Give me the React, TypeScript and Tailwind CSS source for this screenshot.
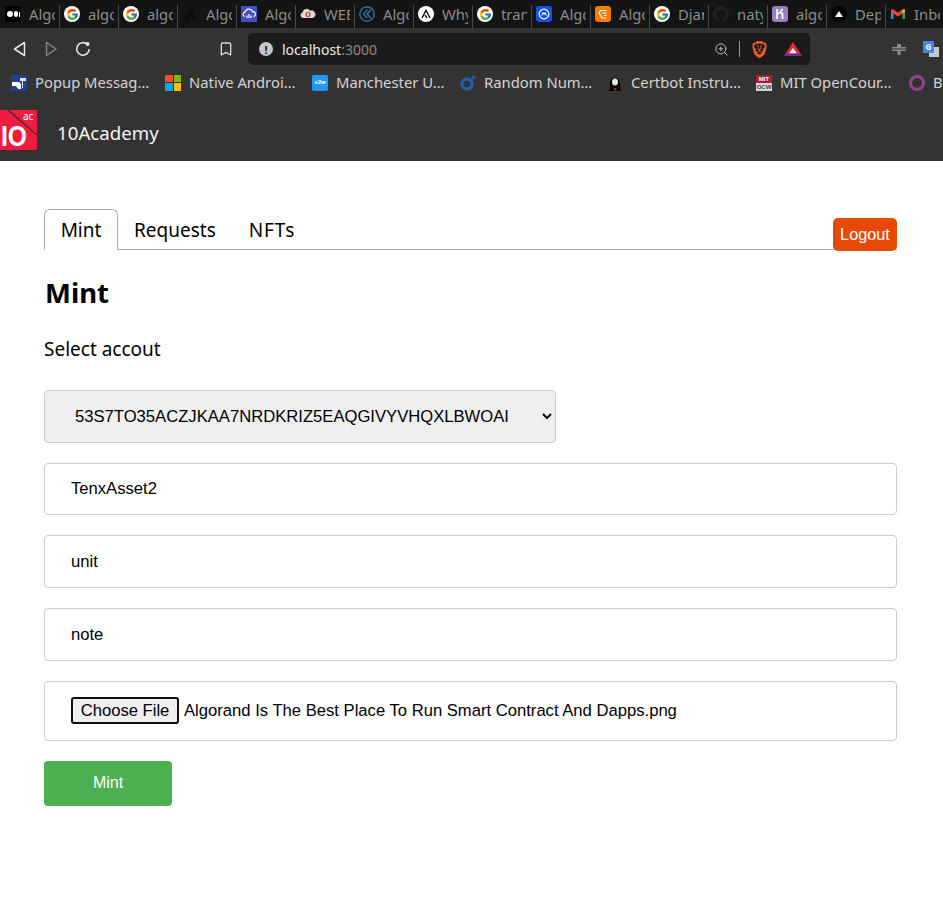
import React from "react";
import { FcGoogle } from "react-icons/fc";
import { SiBrave, SiGithub } from "react-icons/si";
import { Bookmark, ZoomIn } from "lucide-react";

const Medium = () => (
  <div className="w-4 h-4 bg-black rounded-[2px] flex items-center justify-center gap-px">
    <span className="w-[6px] h-[6px] rounded-full bg-white" />
    <span className="w-[4px] h-[6px] rounded-full bg-white" />
    <span className="w-[1px] h-[5px] bg-white" />
  </div>
);
const GoogleIcon = () => (
  <div className="w-4 h-4 rounded-full bg-white flex items-center justify-center">
    <FcGoogle size={13} />
  </div>
);
const AlgoMark = ({ round }: { round?: boolean }) => (
  <div className={`w-4 h-4 flex items-center justify-center ${round ? "bg-white rounded-full" : ""}`}>
    <svg viewBox="0 0 16 16" className="w-4 h-4">
      <path d={round ? "M4 12 8 4.5 12 12M7 9l2 3" : "M1 15 10 1M5 15 10 6l2 9"} fill="none" stroke={round ? "#000" : "#0a0a0a"} strokeWidth={round ? 1.3 : 1.8} />
    </svg>
  </div>
);
const CloudBlue = () => (
  <div className="w-4 h-4 bg-[#3f51c4] flex items-center justify-center">
    <svg viewBox="0 0 16 16" className="w-4 h-4">
      <path d="M3.5 10.5a2.3 2.3 0 0 1 .5-4.4 4 4 0 0 1 7.6-.3 2.4 2.4 0 0 1 1 4.7" fill="none" stroke="#fff" strokeWidth="1.2" />
      <path d="M6 12V9.5M8 12V8M10 12V9.5" stroke="#fff" strokeWidth="1.2" />
    </svg>
  </div>
);
const CloudRed = () => (
  <svg viewBox="0 0 16 16" className="w-4 h-4">
    <path d="M3 12a3 3 0 0 1-.4-5.8A4 4 0 0 1 10 4.8 3.5 3.5 0 0 1 13 12Z" fill="#d8d8d8" />
    <circle cx="8" cy="8.5" r="2" fill="none" stroke="#d33" strokeWidth="1.2" />
  </svg>
);
const Kava = () => (
  <svg viewBox="0 0 16 16" className="w-4 h-4">
    <circle cx="8" cy="8" r="7.2" fill="none" stroke="#2a7fb8" strokeWidth="1.3" />
    <path d="M8.5 3.8 4.5 8l4 4.2M12 3.8 8 8l4 4.2" fill="none" stroke="#2a7fb8" strokeWidth="1.3" />
  </svg>
);
const BlueChat = () => (
  <div className="w-4 h-4 rounded-[3px] bg-[#1652f0] flex items-center justify-center">
    <svg viewBox="0 0 16 16" className="w-4 h-4">
      <circle cx="8" cy="8" r="4.8" fill="none" stroke="#fff" strokeWidth="1.2" />
      <path d="m5.6 9.5 1.5-3 1 2 1-2 1.2 3" fill="none" stroke="#fff" strokeWidth="1" />
    </svg>
  </div>
);
const OrangeBox = () => (
  <div className="w-4 h-4 rounded-[3px] bg-[#f57c00] flex items-center justify-center">
    <svg viewBox="0 0 16 16" className="w-4 h-4">
      <path d="M11.5 4.5h-6L4 7l3 5h4M7 7h4.5M9 9.5h2.5" fill="none" stroke="#fff" strokeWidth="1.2" />
    </svg>
  </div>
);
const Heroku = () => (
  <div className="w-4 h-4 rounded-[3px] bg-[#9a7fc0] flex items-center justify-center">
    <svg viewBox="0 0 16 16" className="w-4 h-4">
      <path d="M5 3v10M5 8c2-1.6 5-2 5.5 0v5M10.5 3l-2 2.5" fill="none" stroke="#fff" strokeWidth="1.7" />
    </svg>
  </div>
);
const Deploy = () => (
  <div className="w-4 h-4 rounded-full bg-black flex items-center justify-center">
    <div className="w-0 h-0 border-l-[4px] border-r-[4px] border-b-[6px] border-l-transparent border-r-transparent border-b-white" />
  </div>
);
const Gmail = () => (
  <svg viewBox="0 0 16 16" className="w-4 h-4">
    <path d="M1 13V4l2.5 1.8V13Z" fill="#4285f4" />
    <path d="M15 13V4l-2.5 1.8V13Z" fill="#34a853" />
    <path d="M1 4.5 3 3l5 3.8L13 3l2 1.5-1 2.3-1.5 1L8 10.6 3.5 7.800 2 6.800Z" fill="#ea4335" />
    <path d="M12.500 3.400 15 3.500v2l-2.500 2.300Z" fill="#fbbc04" />
  </svg>
);

const tabs: { icon: React.ReactNode; label: string }[] = [
  { icon: <Medium />, label: "Algo" },
  { icon: <GoogleIcon />, label: "algo" },
  { icon: <GoogleIcon />, label: "algo" },
  { icon: <AlgoMark />, label: "Algo" },
  { icon: <CloudBlue />, label: "Algo" },
  { icon: <CloudRed />, label: "WEB" },
  { icon: <Kava />, label: "Algo" },
  { icon: <AlgoMark round />, label: "Why" },
  { icon: <GoogleIcon />, label: "tran" },
  { icon: <BlueChat />, label: "Algo" },
  { icon: <OrangeBox />, label: "Algo" },
  { icon: <GoogleIcon />, label: "Djan" },
  { icon: <SiGithub size={16} color="#1d2226" />, label: "naty" },
  { icon: <Heroku />, label: "algo" },
  { icon: <Deploy />, label: "Dep" },
  { icon: <Gmail />, label: "Inbo" },
];

const bookmarks: { icon: React.ReactNode; label: string; width: string }[] = [
  {
    icon: (
      <svg viewBox="0 0 16 16" className="w-4 h-4">
        <rect width="16" height="16" fill="#24418f" />
        <path d="M1 7h7l2 2v5H7L5 11H1Z" fill="#fff" />
        <path d="M9 3h6v3h-3v7h-1V6H9Z" fill="#dfe6f5" />
      </svg>
    ),
    label: "Popup Messag…",
    width: "w-[154px]",
  },
  {
    icon: (
      <div className="w-4 h-4 grid grid-cols-2 gap-px">
        <span className="bg-[#f25022]" />
        <span className="bg-[#7fba00]" />
        <span className="bg-[#00a4ef]" />
        <span className="bg-[#ffb900]" />
      </div>
    ),
    label: "Native Androi…",
    width: "w-[147px]",
  },
  {
    icon: (
      <div className="w-4 h-4 rounded-[2px] bg-[#2196f3] flex items-center justify-center text-[6px] font-bold text-white font-['Liberation_Sans',sans-serif]">
        s2w
      </div>
    ),
    label: "Manchester U…",
    width: "w-[148px]",
  },
  {
    icon: (
      <svg viewBox="0 0 16 16" className="w-4 h-4">
        <circle cx="7" cy="9" r="5" fill="none" stroke="#1f5fa8" strokeWidth="3.400" />
        <circle cx="13.500" cy="2.500" r="2" fill="#1f5fa8" />
      </svg>
    ),
    label: "Random Num…",
    width: "w-[147px]",
  },
  {
    icon: (
      <svg viewBox="0 0 16 16" className="w-4 h-4">
        <path d="M1 16c2-1 2-3 2-8a5 5 0 0 1 10 0c0 5 0 7 2 8Z" fill="#000" />
        <ellipse cx="8" cy="7" rx="3" ry="3.500" fill="#e8e8e8" />
        <circle cx="8" cy="14" r="1.500" fill="#d01010" />
      </svg>
    ),
    label: "Certbot Instru…",
    width: "w-[149px]",
  },
  {
    icon: (
      <div className="w-4 h-4 flex flex-col font-['Liberation_Sans',sans-serif] text-[6px] leading-[8px] font-bold text-center">
        <span className="bg-[#a31f34] text-white">MIT</span>
        <span className="bg-[#d8d8d8] text-[#444]">OCW</span>
      </div>
    ),
    label: "MIT OpenCour…",
    width: "w-[153px]",
  },
  {
    icon: <div className="w-4 h-4 rounded-full border-[3px] border-[#97418b]" />,
    label: "B",
    width: "w-[60px]",
  },
];

const fieldClass =
  "block w-full h-[52.7px] px-[26px] border border-[#ccc] rounded-[4px] text-[16.64px] text-black bg-white outline-none font-['Liberation_Sans',Arial,sans-serif]";

function BrowserChrome() {
  return (
    <div className="bg-[#333333] font-['Noto_Sans',sans-serif]">
      <div className="h-[28px] bg-[#141414] flex overflow-hidden">
        {tabs.map((tab, i) => (
          <div key={i} className="w-[59px] shrink-0 h-full flex items-center pl-[5px] relative">
            <div className="shrink-0 w-4 h-4 flex items-center justify-center">{tab.icon}</div>
            <div className="ml-[8px] w-[26px] overflow-hidden whitespace-nowrap text-[14.8px] text-[#8c8c8c]">
              {tab.label}
            </div>
            <div className="absolute -right-px top-[5px] h-[23px] w-px bg-[#4a4a4a]" />
          </div>
        ))}
      </div>
      <div className="h-[37px] pt-[5px] flex items-center">
        <div className="flex items-center pl-[11px] w-[248px]">
          <svg viewBox="0 0 16 16" className="w-4 h-4">
            <path d="M13.500 1.500 3.500 8l10 6.500Z" fill="none" stroke="#e8e8e8" strokeWidth="1.500" strokeLinejoin="round" />
          </svg>
          <svg viewBox="0 0 16 16" className="w-4 h-4 ml-[16px]">
            <path d="M3.500 1.500 13 8l-9.500 6.500Z" fill="none" stroke="#8a8a8a" strokeWidth="1.400" strokeLinejoin="round" />
          </svg>
          <svg viewBox="0 0 16 16" className="w-4 h-4 ml-[16px]">
            <path d="M12.400 3.400A6.300 6.300 0 1 0 14.300 8" fill="none" stroke="#e8e8e8" strokeWidth="1.600" />
            <circle cx="12.600" cy="3" r="1.900" fill="#e8e8e8" />
          </svg>
          <Bookmark size={16} color="#d8d8d8" strokeWidth={2} className="ml-[127px]" />
        </div>
        <div className="w-[562px] h-[32px] bg-[#1b1b1b] rounded-[5px] flex items-center pl-[11px] pr-[8px]">
          <div className="w-[14px] h-[14px] rounded-full bg-[#c6c6c6] flex items-center justify-center text-[11px] font-bold text-[#1b1b1b] leading-none">
            !
          </div>
          <div className="ml-[9px] text-[14px] text-[#e8e8e8]">
            localhost<span className="text-[#8c8c8c]">:3000</span>
          </div>
          <div className="ml-auto flex items-center">
            <ZoomIn size={15} color="#bdbdbd" strokeWidth={1.600} />
            <div className="w-px h-[16px] bg-[#9a9a9a] ml-[10px]" />
            <SiBrave size={17} color="#f1592a" className="ml-[11px]" />
            <svg viewBox="0 0 18 16" className="w-[18px] h-4 ml-[16px]">
              <path d="M9 1 18 15H0Z" fill="#e8283f" />
              <path d="M9 7 13 12.500H5Z" fill="#fff" />
              <path d="M0 15 3 12.500h12l3 2.500Z" fill="#662d91" />
            </svg>
          </div>
        </div>
        <svg viewBox="0 0 16 16" className="w-4 h-4 ml-[81px]">
          <path d="M1 6h14v4H1ZM6 3h4v3H6ZM6.500 10h3v4h-3Z" fill="#8a8a8a" />
          <path d="M1 8h14" stroke="#333" strokeWidth="1" />
        </svg>
        <div className="ml-[16px] w-4 h-4 relative">
          <div className="absolute right-0 bottom-0 w-[10px] h-[10px] bg-[#c8c8c8]" />
          <div className="absolute left-0 top-0 w-[11px] h-[12px] bg-[#4285f4] rounded-[1px] flex items-center justify-center text-[8px] font-bold text-white leading-none">
            G
          </div>
        </div>
      </div>
      <div className="h-[35px] flex items-center pl-[11px] overflow-hidden">
        {bookmarks.map((b, i) => (
          <div key={i} className={`${b.width} shrink-0 flex items-center`}>
            <div className="shrink-0 w-4 h-4">{b.icon}</div>
            <div className="ml-[8px] text-[14.8px] text-[#d4d4d4] whitespace-nowrap">{b.label}</div>
          </div>
        ))}
      </div>
    </div>
  );
}

function Navbar() {
  return (
    <div className="h-[61px] bg-[#333333] flex items-start font-['Noto_Sans',sans-serif]">
      <svg viewBox="0 0 37 40" className="w-[37px] h-[40px] mt-[10px]">
        <rect width="37" height="40" fill="#f01c40" />
        <path d="M8 0 37 25" stroke="#3a2a2e" strokeWidth="1.300" />
        <text x="23" y="10" fontSize="10" fill="#fff" fontFamily="Noto Sans, sans-serif">
          ac
        </text>
        <text x="1" y="36" fontSize="29" fontWeight="700" fill="#fff" fontFamily="Liberation Sans, sans-serif" textLength="26" lengthAdjust="spacingAndGlyphs">
          IO
        </text>
      </svg>
      <div className="ml-[20px] mt-[19px] text-[18.7px] leading-[28px] text-[#f5f5f5]">10Academy</div>
    </div>
  );
}

export default function App() {
  return (
    <div className="min-h-[917px] bg-white overflow-hidden">
      <BrowserChrome />
      <Navbar />
      <div className="pl-[44px] pr-[46px] pt-[48px] text-black font-['Noto_Sans',sans-serif]">
        <div className="relative">
          <div className="flex h-[41px] border-b border-[#aaa]">
            <div className="w-[74px] h-[41px] pt-[2px] border border-b-white border-[#aaa] rounded-t-[6px] bg-white flex items-center justify-center text-[19px]">
              Mint
            </div>
            <div className="ml-[16px] h-[40px] pt-[2px] flex items-center text-[19px]">Requests</div>
            <div className="ml-[33px] h-[40px] pt-[2px] flex items-center text-[19px] tracking-[0.9px]">NFTs</div>
          </div>
          <button className="absolute right-0 top-[9px] w-[64px] h-[33px] rounded-[5px] bg-[#e64a05] text-white text-[16.3px] font-['Liberation_Sans',Arial,sans-serif]">
            Logout
          </button>
        </div>
        <h1 className="mt-[23px] ml-px text-[27.5px] leading-[40px] font-bold">Mint</h1>
        <p className="mt-[23.1px] text-[19px] leading-[26px]">Select accout</p>
        <select className="mt-[28px] block w-[512px] h-[52.7px] px-[26px] border border-[#ccc] rounded-[4px] text-[16.64px] text-black bg-[#efefef] font-['Liberation_Sans',Arial,sans-serif]">
          <option>53S7TO35ACZJKAA7NRDKRIZ5EAQGIVYVHQXLBWOAI</option>
        </select>
        <input className={`mt-[20px] ${fieldClass}`} defaultValue="TenxAsset2" />
        <input className={`mt-[20px] ${fieldClass}`} defaultValue="unit" />
        <input className={`mt-[20px] ${fieldClass}`} defaultValue="note" />
        <div className="mt-[20px] h-[60px] px-[26px] border border-[#ccc] rounded-[4px] flex items-center text-[16.64px] font-['Liberation_Sans',Arial,sans-serif]">
          <button className="w-[108px] h-[27px] border-2 border-[#101010] rounded-[3px] bg-[#efefef] text-[16.64px]">
            Choose File
          </button>
          <span className="ml-[5px] pt-[2px]">Algorand Is The Best Place To Run Smart Contract And Dapps.png</span>
        </div>
        <button className="mt-[20px] block w-[128px] h-[45px] rounded-[4px] bg-[#4caf50] text-white text-[16px] font-['Liberation_Sans',Arial,sans-serif]">
          Mint
        </button>
      </div>
    </div>
  );
}
